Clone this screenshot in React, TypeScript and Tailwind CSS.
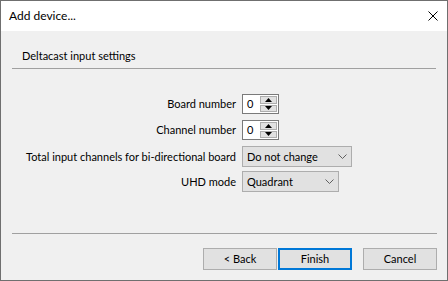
import React from "react";

function Spin({ value }: { value: string }) {
  return (
    <div className="flex h-[20px] w-[37px] border border-[#7a7a7a] bg-white">
      <div className="flex flex-1 items-center pl-[4px] text-black">{value}</div>
      <div className="flex w-[18px] flex-col gap-[1px] py-[1px] pr-[1px]">
        <div className="flex h-[8px] items-center justify-center border border-[#adadad] bg-[#e1e1e1]">
          <svg width="7" height="4" viewBox="0 0 7 4">
            <path d="M3.5 0 L7 4 L0 4 Z" fill="#000" />
          </svg>
        </div>
        <div className="flex h-[8px] items-center justify-center border border-[#adadad] bg-[#e1e1e1]">
          <svg width="7" height="4" viewBox="0 0 7 4">
            <path d="M0 0 L7 0 L3.5 4 Z" fill="#000" />
          </svg>
        </div>
      </div>
    </div>
  );
}

function Combo({ value, wide }: { value: string; wide: boolean }) {
  return (
    <div
      className={
        "flex h-[21px] items-center justify-between border border-[#adadad] bg-[#e1e1e1] pl-[4px] pr-[4px] " +
        (wide ? "w-[110px]" : "w-[97px]")
      }
    >
      <span>{value}</span>
      <svg width="9" height="5" viewBox="0 0 9 5">
        <path d="M0.5 0.5 L4.5 4.5 L8.5 0.5" fill="none" stroke="#606060" strokeWidth="1" />
      </svg>
    </div>
  );
}

function Row({ label, children, className }: { label: string; children: React.ReactNode; className?: string }) {
  return (
    <div className={"flex items-center gap-[6px] " + (className ?? "")}>
      <div className="w-[224px] text-right">{label}</div>
      {children}
    </div>
  );
}

function Btn({ label, primary }: { label: string; primary?: boolean }) {
  return (
    <div
      className={
        "flex h-[22px] w-[74px] items-center justify-center bg-[#e1e1e1] " +
        (primary ? "border-2 border-[#0078d7]" : "border border-[#adadad]")
      }
    >
      {label}
    </div>
  );
}

export default function App() {
  return (
    <div className="flex h-[281px] w-[448px] flex-col border border-[#6f6f6f] bg-[#f0f0f0] font-['Lato',sans-serif] text-[11px] leading-[14px] text-black">
      <div className="flex h-[30px] shrink-0 items-center justify-between bg-white pl-[8px] pr-[9px]">
        <span className="text-[12px]">Add device...</span>
        <svg width="10" height="10" viewBox="0 0 10 10">
          <path d="M0.5 0.5 L9.5 9.5 M9.5 0.5 L0.5 9.5" stroke="#000" strokeWidth="1" />
        </svg>
      </div>
      <div className="flex flex-1 flex-col px-[11px]">
        <div className="h-[37px] pl-[10px] pt-[17px] leading-[16px]">Deltacast input settings</div>
        <div className="h-px bg-[#a0a0a0]" />
        <div className="mt-[25px] flex flex-col">
          <Row label="Board number">
            <Spin value="0" />
          </Row>
          <Row label="Channel number" className="mt-[6px]">
            <Spin value="0" />
          </Row>
          <Row label="Total input channels for bi-directional board" className="mt-[6px]">
            <Combo value="Do not change" wide />
          </Row>
          <Row label="UHD mode" className="mt-[4px]">
            <Combo value="Quadrant" wide={false} />
          </Row>
        </div>
        <div className="flex-1" />
        <div className="-mr-px h-px bg-[#a0a0a0]" />
        <div className="-mr-px mt-[14px] mb-[10px] flex justify-end">
          <Btn label="< Back" />
          <div className="ml-[1px]">
            <Btn label="Finish" primary />
          </div>
          <div className="ml-[11px]">
            <Btn label="Cancel" />
          </div>
        </div>
      </div>
    </div>
  );
}
